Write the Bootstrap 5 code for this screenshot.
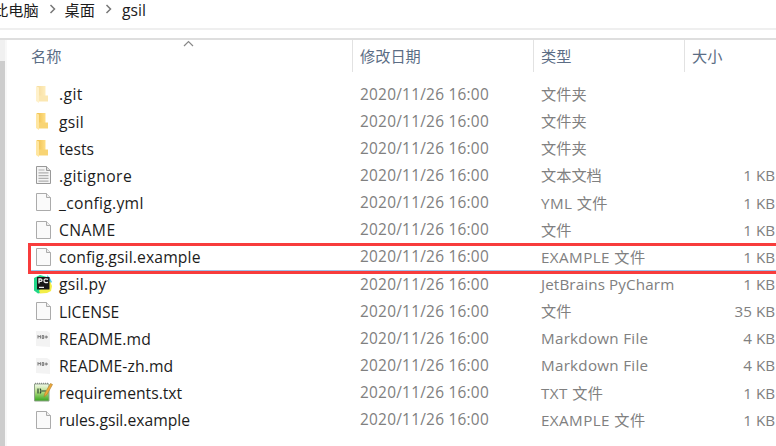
<!DOCTYPE html>
<html lang="zh-CN">
<head>
<meta charset="utf-8">
<meta name="viewport" content="width=device-width, initial-scale=1">
<title>gsil</title>
<link href="https://cdn.jsdelivr.net/npm/bootstrap@5.3.0/dist/css/bootstrap.min.css" rel="stylesheet">
<style>
  body { font-family: "Open Sans", "Noto Sans CJK SC", sans-serif; font-size: 15.2px; color: #1c1c1c; height: 446px; line-height: 1.2; }
  .defs { position: absolute; width: 0; height: 0; }
  .crumbs { height: 30px; border-bottom: 2px solid #efefef; padding-bottom: 8px; white-space: nowrap; }
  .crumbs .here { margin-left: -7px; }
  .crumbs .leaf { font-size: 15.7px; margin-left: 1px; }
  .pane { margin-top: 8px; border-top: 2px solid #dedede; height: 408px; }
  .track { width: 5px; background: #f0f0f0; padding-top: 21px; }
  .thumb { background: #cdcdcd; }
  .edge { width: 2px; background: #f8f8f8; }
  .cols { display: grid; grid-template-columns: 345px 181px 151px 91px; }
  .heads { height: 32px; color: #5b6d85; margin-bottom: 8.5px; }
  .heads > div { padding-top: 1px; padding-left: 7px; border-left: 1px solid #e2e2e2; }
  .heads > div:first-child { padding-left: 24px; border-left: 0; }
  .sorter { position: absolute; left: 176px; top: 0; }
  .file { height: 27.15px; color: #808080; white-space: nowrap; }
  .file > .fname { padding-top: 1.6px; padding-left: 26px; color: #1c1c1c; font-size: 15.7px; }
  .file > .date { padding-top: 1.6px; font-size: 15.4px; letter-spacing: .25px; padding-left: 8px; }
  .file > .kind { padding-left: 8px; }
  .file > .size { text-align: right; }
  .sp-1 { letter-spacing: .13px; }
  .sp-2 { letter-spacing: .27px; }
  .sp-3 { letter-spacing: .42px; }
  .fname svg { width: 20px; height: 22px; margin-right: 6px; flex: none; }
  .marker { position: absolute; left: 21px; right: -6px; top: 203px; height: 31px; border: 3px solid #f83c3c; }
  .marker::after { content: ""; position: absolute; left: 0; right: 0; bottom: 0; height: 1px; background: #9fc3e8; }
</style>
<script src="https://cdn.jsdelivr.net/npm/bootstrap@5.3.0/dist/js/bootstrap.bundle.min.js"></script>
</head>
<body class="bg-white overflow-hidden">
<svg class="defs" xmlns="http://www.w3.org/2000/svg">
  <defs>
    <linearGradient id="gold" x1="0" x2="1"><stop offset="0" stop-color="#efc050"/><stop offset="1" stop-color="#ffdf86"/></linearGradient>
    <linearGradient id="leaf" x1="0" y1="0" x2="0" y2="1"><stop offset="0" stop-color="#f4faee"/><stop offset=".45" stop-color="#b5dd85"/><stop offset="1" stop-color="#35a51c"/></linearGradient>
    <symbol id="folder" viewBox="0 0 20 22"><path d="M4 2h8.500v10.500H4z" fill="url(#gold)"/><path d="M5 11.500h10v6H5z" fill="#f8d474"/><path d="M3 2l3 1.500V19L3 17z" fill="#ffe6a0"/></symbol>
    <symbol id="page" viewBox="0 0 20 22"><path d="M3.500 1.500h10l4 4v13h-14z" fill="#fafafa" stroke="#ababab"/><path d="M13.500 1.500v4h4" fill="#eee" stroke="#ababab"/></symbol>
    <symbol id="lines" viewBox="0 0 20 22"><path d="M3.500 1.500h10l4 4v13h-14z" fill="#f4f4f4" stroke="#999"/><path d="M13.500 1.500v4h4" fill="#ddd" stroke="#999"/><path d="M5.500 5h6m-6 2.800h10m-10 2.800h10m-10 2.800h10m-10 2.800h10" stroke="#b0b0b0" stroke-width="1.200"/></symbol>
    <symbol id="charm" viewBox="0 0 20 22"><path d="M1 4l6-3 7 2-2 15-7 1.500-4-3z" fill="#21d789"/><path d="M14 1l3 3 2 4-4 3z" fill="#4cc8ee"/><path d="M17 7l2 5-1 5-4 2-7 .5-1-3z" fill="#f3ee48"/><path d="M4 3h12.500v12.500H4z" fill="#171717"/><path d="M6 9.500V5h2q2 1.200 0 2.400H6m9-2q-4-1.300-4 1.300t4 1.600M6 13.300h5" fill="none" stroke="#eee" stroke-width="1.300"/></symbol>
    <symbol id="mark-file" viewBox="0 0 20 22"><path d="M3 3h11l3 2v14l-14-1z" fill="#f3f3f3"/><path d="M5 10.500v-3l1.200 1.500 1.200-1.500v3m1.800-3v3h1.500v-3H9.200m4 0v3m-1.500-1.500h3.300" fill="none" stroke="#777" stroke-width="1"/></symbol>
    <symbol id="notepad" viewBox="0 0 20 22"><path d="M1.500 2h14.500v17h-14.500z" fill="url(#leaf)" stroke="#8fa38a"/><path d="M2 1.300h13" stroke="#777" stroke-dasharray="1 1"/><path d="M5 6.500v5M7 6.500q2 2.500 0 5M9 9h4" fill="none" stroke="#2d4932" stroke-width="1.200"/><path d="M11 15l1-4 5.500-9.500 2 1-5.500 10z" fill="#efa93a" stroke="#ad7c2b" stroke-width=".6"/></symbol>
  </defs>
</svg>

<nav class="crumbs d-flex align-items-center">
  <span class="here">此电脑</span>
  <svg width="26" height="12" viewBox="0 0 26 12" fill="none" stroke="#777" stroke-width="1.500"><path d="M11.500 1l4 4-4 4"/></svg>
  <span>桌面</span>
  <svg width="26" height="12" viewBox="0 0 26 12" fill="none" stroke="#777" stroke-width="1.500"><path d="M11.500 1l4 4-4 4"/></svg>
  <span class="leaf">gsil</span>
</nav>

<main class="pane d-flex">
  <div class="track d-flex"><div class="thumb flex-fill"></div></div>
  <div class="edge"></div>
  <section class="flex-fill position-relative">
    <svg class="sorter" width="12" height="8" viewBox="0 0 12 8" fill="none" stroke="#888" stroke-width="1.200"><path d="M1 6l4.500-4.500L10 6"/></svg>
    <div class="cols heads">
      <div class="d-flex align-items-center">名称</div>
      <div class="d-flex align-items-center">修改日期</div>
      <div class="d-flex align-items-center">类型</div>
      <div class="d-flex align-items-center">大小</div>
    </div>
    <div class="cols file align-items-center"><div class="fname d-flex align-items-center"><svg opacity=".55"><use href="#folder"/></svg><span class="sp-3">.git</span></div><div class="date">2020/11/26 16:00</div><div class="kind">文件夹</div><div class="size"></div></div>
    <div class="cols file align-items-center"><div class="fname d-flex align-items-center"><svg><use href="#folder"/></svg><span class="sp-2">gsil</span></div><div class="date">2020/11/26 16:00</div><div class="kind">文件夹</div><div class="size"></div></div>
    <div class="cols file align-items-center"><div class="fname d-flex align-items-center"><svg><use href="#folder"/></svg><span>tests</span></div><div class="date">2020/11/26 16:00</div><div class="kind">文件夹</div><div class="size"></div></div>
    <div class="cols file align-items-center"><div class="fname d-flex align-items-center"><svg><use href="#lines"/></svg><span class="sp-3">.gitignore</span></div><div class="date">2020/11/26 16:00</div><div class="kind">文本文档</div><div class="size">1 KB</div></div>
    <div class="cols file align-items-center"><div class="fname d-flex align-items-center"><svg><use href="#page"/></svg><span class="sp-2">_config.yml</span></div><div class="date">2020/11/26 16:00</div><div class="kind sp-3">YML 文件</div><div class="size">1 KB</div></div>
    <div class="cols file align-items-center"><div class="fname d-flex align-items-center"><svg><use href="#page"/></svg><span class="sp-3">CNAME</span></div><div class="date">2020/11/26 16:00</div><div class="kind">文件</div><div class="size">1 KB</div></div>
    <div class="cols file align-items-center"><div class="fname d-flex align-items-center"><svg><use href="#page"/></svg><span class="sp-1">config.gsil.example</span></div><div class="date">2020/11/26 16:00</div><div class="kind sp-3">EXAMPLE 文件</div><div class="size">1 KB</div></div>
    <div class="cols file align-items-center"><div class="fname d-flex align-items-center"><svg><use href="#charm"/></svg><span class="sp-2">gsil.py</span></div><div class="date">2020/11/26 16:00</div><div class="kind sp-1">JetBrains PyCharm</div><div class="size">1 KB</div></div>
    <div class="cols file align-items-center"><div class="fname d-flex align-items-center"><svg><use href="#page"/></svg><span>LICENSE</span></div><div class="date">2020/11/26 16:00</div><div class="kind">文件</div><div class="size">35 KB</div></div>
    <div class="cols file align-items-center"><div class="fname d-flex align-items-center"><svg><use href="#mark-file"/></svg><span class="sp-1">README.md</span></div><div class="date">2020/11/26 16:00</div><div class="kind sp-2">Markdown File</div><div class="size">4 KB</div></div>
    <div class="cols file align-items-center"><div class="fname d-flex align-items-center"><svg><use href="#mark-file"/></svg><span class="sp-1">README-zh.md</span></div><div class="date">2020/11/26 16:00</div><div class="kind sp-2">Markdown File</div><div class="size">4 KB</div></div>
    <div class="cols file align-items-center"><div class="fname d-flex align-items-center"><svg><use href="#notepad"/></svg><span>requirements.txt</span></div><div class="date">2020/11/26 16:00</div><div class="kind sp-3">TXT 文件</div><div class="size">1 KB</div></div>
    <div class="cols file align-items-center"><div class="fname d-flex align-items-center"><svg><use href="#page"/></svg><span>rules.gsil.example</span></div><div class="date">2020/11/26 16:00</div><div class="kind sp-3">EXAMPLE 文件</div><div class="size">1 KB</div></div>
    <div class="marker"></div>
  </section>
</main>
</body>
</html>
